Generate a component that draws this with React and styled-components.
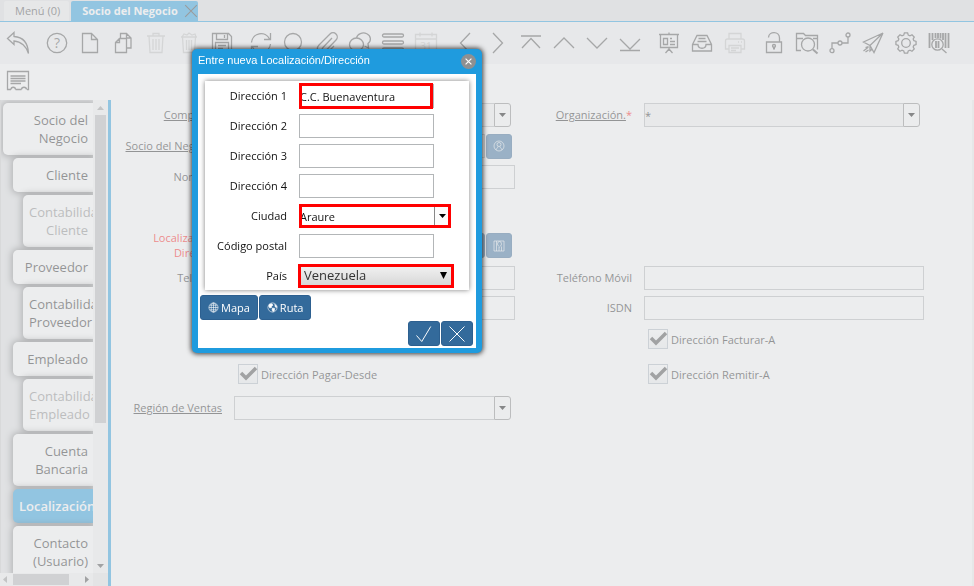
import React, { useState } from 'react';
import styled, { createGlobalStyle, css } from 'styled-components';

const GlobalStyle = createGlobalStyle`
  * { box-sizing: border-box; }
  body {
    margin: 0;
    overflow: hidden;
    font-family: 'Open Sans', 'Noto Sans', sans-serif;
    font-size: 11px;
    line-height: 15px;
    color: #111;
  }
  button, input, select { font: inherit; color: inherit; margin: 0; }
`;

const Page = styled.div`
  display: flex;
  flex-direction: column;
  height: 100vh;
  background: #fff;
`;

/* ---------- window tabs ---------- */

const WindowTabs = styled.nav`
  display: flex;
  align-items: flex-end;
  gap: 2px;
  height: 22px;
  padding-left: 4px;
  background: #e0e1e3;
  border-bottom: 1px solid #1f9bde;
`;

const WindowTab = styled.div`
  display: flex;
  align-items: center;
  height: 20px;
  padding-left: 11px;
  border-radius: 2px 2px 0 0;
  background: ${p => (p.$active ? '#1f9bde' : '#f0f0f1')};
  ${p => !p.$active && css`padding-right: 9px;`}
`;

const WindowTabLink = styled.a`
  padding-bottom: 1px;
  color: ${p => (p.$active ? '#fff' : '#444')};
  font-weight: ${p => (p.$active ? 700 : 400)};
  text-decoration: none;
  white-space: nowrap;
`;

const TabClose = styled.button`
  display: flex;
  padding: 0;
  margin-left: 6px;
  border: 0;
  background: none;
  color: #333;
`;

/* ---------- toolbar ---------- */

const Toolbar = styled.div`
  display: flex;
  gap: 6px;
  flex: none;
  height: ${p => (p.$second ? '36px' : '42px')};
  padding-left: 1px;
  background: ${p => (p.$second ? '#fff' : '#f3f3f4')};
`;

const ToolGroup = styled.div`
  display: flex;
`;

const ToolButton = styled.button`
  display: flex;
  align-items: center;
  justify-content: center;
  width: 33px;
  padding: 0;
  border: 0;
  background: none;
  color: #505050;
  &:disabled { color: #c4c4c4; }
`;

/* ---------- left tab list ---------- */

const Body = styled.div`
  display: flex;
  flex: 1;
  min-height: 0;
`;

const Side = styled.aside`
  display: grid;
  grid-template-columns: 93px 15px;
  grid-template-rows: 1fr 13px;
  flex: none;
  border-right: 3px solid #1f9bde;
  background: #e8e8e9;
`;

const TabList = styled.div`
  display: flex;
  flex-direction: column;
  gap: 3px;
  min-height: 0;
  overflow: hidden;
  padding-top: 3px;
  background: #e0e1e3;
  border-left: 1px solid #ccc;
`;

const SideTab = styled.a`
  flex: none;
  margin-left: ${p => 2 + p.$level * 10}px;
  padding: 8px 5px 8px 6px;
  border-radius: 5px 0 0 5px;
  background: ${p => (p.$active ? '#1f9bde' : '#fff')};
  box-shadow: 0 0 6px 2px rgba(0, 0, 0, 0.45);
  color: ${p => (p.$active ? '#fff' : p.$off ? '#888' : '#222')};
  font-size: 13px;
  line-height: 18px;
  font-weight: ${p => (p.$active ? 600 : 400)};
  text-align: right;
  text-decoration: none;
`;

const ScrollTrack = styled.div`
  display: flex;
  flex-direction: ${p => (p.$horizontal ? 'row' : 'column')};
  align-items: center;
  justify-content: space-between;
  padding: ${p => (p.$horizontal ? '0 4px 0 3px' : '6px 0 5px')};
  background: #f4f4f4;
  color: #444;
  > svg:first-child { color: #999; }
`;

const ScrollThumb = styled.div`
  background: #b9b9bb;
  ${p => p.$horizontal
    ? css`width: 56px; height: 11px; margin-right: 10px;`
    : css`flex: 0 1 308px; width: 11px; margin: 5px 0 auto;`}
`;

/* ---------- record form ---------- */

const Form = styled.form`
  flex: 1;
  display: grid;
  grid-template-columns: 111fr 281fr 105fr 280fr 36fr;
  grid-template-rows: 24px 26px 24px 30px 29px 24px 24px 26px 32px 24px;
  gap: 6px 12px;
  align-content: start;
  align-items: center;
  padding-top: 3px;
  border-right: 2px solid #f0f0f0;
`;

const Label = styled.label`
  grid-column: ${p => p.$col};
  grid-row: ${p => p.$row};
  padding-bottom: 2px;
  text-align: right;
  color: ${p => (p.$error ? '#f00' : '#222')};
`;

const Underlined = styled.span`
  text-decoration: underline;
`;

const Star = styled.span`
  color: #f00;
`;

const Cell = styled.div`
  grid-column: ${p => p.$col};
  grid-row: ${p => p.$row};
  display: flex;
  gap: 1px;
  min-width: 0;
  padding-right: ${p => p.$inset || 0}px;
`;

const TextBox = styled.input`
  flex: 1;
  min-width: 0;
  width: 100%;
  height: 24px;
  padding: 2px 0;
  border: 1px solid #b3b6b8;
  background: ${p => (p.readOnly ? '#f4f4f4' : '#fff')};
  outline: 0;
`;

const ComboBox = styled.div`
  flex: 1;
  display: flex;
  min-width: 0;
  ${TextBox} { border-right: 0; }
`;

const ComboButton = styled.button`
  display: flex;
  align-items: center;
  justify-content: center;
  width: 17px;
  height: 24px;
  padding: 0;
  border: 1px solid #888;
  border-radius: 0 3px 3px 0;
  background: #fcfcfc;
  color: #000;
`;

const ActionButton = styled.button`
  display: flex;
  align-items: center;
  justify-content: center;
  gap: 2px;
  min-width: ${p => (p.$wide ? '32px' : '26px')};
  height: 25px;
  padding: 0 ${p => (p.$text ? '7px' : '0')};
  border: 1px solid #2d6090;
  border-radius: 3px;
  background: #336a9b;
  color: #fff;
`;

const CheckLabel = styled.label`
  display: flex;
  align-items: center;
  gap: 3px;
  padding-left: 4px;
  color: #222;
`;

const CheckFrame = styled.span`
  display: grid;
  > * { grid-area: 1 / 1; }
  svg { pointer-events: none; color: #444; }
  input:not(:checked) + svg { visibility: hidden; }
`;

const CheckInput = styled.input`
  appearance: none;
  width: 20px;
  height: 20px;
  border: 1px solid #b0bac2;
  background: linear-gradient(#fff, #f0f2f3);
`;

/* ---------- dialog ---------- */

const Mask = styled.div`
  position: fixed;
  inset: 0;
  background: rgba(224, 225, 227, 0.6);
`;

const Dialog = styled.section`
  position: absolute;
  top: 49px;
  left: 192px;
  width: 290px;
  padding: 0 6px 5px;
  border-radius: 5px;
  background: #1f9bde;
  box-shadow: 0 0 5px 1px rgba(0, 0, 0, 0.75);
`;

const DialogHeader = styled.header`
  display: flex;
  align-items: center;
  justify-content: space-between;
  height: 25px;
`;

const DialogTitle = styled.h2`
  margin: 0;
  padding-bottom: 3px;
  color: #fff;
  font: 11px/15px 'Liberation Sans', Arial, sans-serif;
`;

const DialogClose = styled.button`
  display: flex;
  align-items: center;
  justify-content: center;
  width: 15px;
  height: 15px;
  padding: 0;
  border: 0;
  border-radius: 50%;
  background: #8f9092;
  color: #fff;
`;

const DialogBody = styled.div`
  padding: 7px 2px 2px;
  background: #fff;
`;

const Address = styled.div`
  display: grid;
  grid-template-columns: 82px 1fr;
  grid-auto-rows: 24px;
  gap: 6px 12px;
  align-items: center;
  margin: 0 5px 5px;
  padding: 3px 15px 2px 0;
  background: #fff;
  box-shadow: 0 0 5px rgba(0, 0, 0, 0.5);
`;

const AddressLabel = styled.label`
  padding-bottom: 2px;
  text-align: right;
  color: #111;
`;

/* a frame in red lies over the fields that have to be filled in */
const AddressField = styled.div`
  position: relative;
  display: flex;
  width: ${p => (p.$wide ? '152px' : '135px')};
  ${p => p.$frame && css`
    &::after {
      content: '';
      position: absolute;
      inset: ${p.$frame};
      border: 3px solid #f00;
      pointer-events: none;
    }
  `}
`;

const CountrySelect = styled.select`
  appearance: none;
  flex: 1;
  height: 24px;
  padding: 0 5px 2px;
  border: 0;
  background: linear-gradient(#f4f4f4, #d4d4d4);
  font-size: 13px;
  color: #333;
`;

const SelectArrow = styled.span`
  position: absolute;
  right: 4px;
  top: 8px;
  display: flex;
  pointer-events: none;
`;

const ButtonRow = styled.div`
  display: flex;
  gap: 1px;
  justify-content: ${p => (p.$end ? 'flex-end' : 'flex-start')};
  margin-bottom: 1px;
  ${p => p.$end && css`margin: 0 1px 0 0;`}
`;

/* ---------- icons ---------- */

const Icon = ({ size = 24, width = 1.3, children }) => (
  <svg width={size} height={size} viewBox="0 0 24 24" fill="none" stroke="currentColor" strokeWidth={width} aria-hidden="true">
    {children}
  </svg>
);

const gearPath = () => {
  const points = [];
  for (let i = 0; i < 8; i++) {
    [[-16, 8.2], [-9, 10.2], [9, 10.2], [16, 8.2]].forEach(([shift, r]) => {
      const a = ((i * 45 + shift) * Math.PI) / 180;
      points.push(`${(12 + r * Math.cos(a)).toFixed(2)} ${(12 + r * Math.sin(a)).toFixed(2)}`);
    });
  }
  return `M${points.join('L')}z`;
};

const icons = {
  undo: <path d="M1.500 7.500L8 1.500v4C17 6 22 12 22.500 22.500 20.500 15.500 15 10.500 8 10v3.500z" />,
  help: (
    <>
      <circle cx="12" cy="12" r="9.700" />
      <text x="12" y="17" textAnchor="middle" fontSize="14" fill="currentColor" stroke="none">?</text>
    </>
  ),
  file: <path d="M4.500 2.500h9l6 6v13h-15zM13.500 2.500v6h6" />,
  copy: <path d="M9.500 7V2.500h6l4.500 4.500v10h-4.500M15.500 2.500V7H20M4.500 11.500l4-4h7v14h-11zM8.500 7.500v4h-4" />,
  trash: <path d="M3 5h18M9 5V2.500h6V5M5 5l1 16.500h12L19 5M9 8v11M12 8v11M15 8v11" />,
  trashFull: <path d="M4 6h16M5 6l2-3 3 1 2-2 3 2 3-1 1 3M5.500 6l1 15.500h11l1-15.500M9.500 9v10M12 9v10M14.500 9v10" />,
  save: <path d="M2.500 2.500h16l3 3v16h-19zM6.500 2.500v6h11v-6M14.500 4v3M5.500 21.500v-10h13v10M8 14.500h8M8 17.500h5" />,
  refresh: <path d="M2.500 11.500A9.500 9.500 0 0 1 20.500 8M21.500 2v6.500H15M21.500 13A9.500 9.500 0 0 1 3.500 16M2.500 22v-6.500H9" />,
  search: <><circle cx="11" cy="11" r="8.500" /><path d="M17 17l5 5" /></>,
  clip: <path d="M17 7L8 16.500a2 2 0 0 0 3 3L21 9a4 4 0 0 0-6-6L4 14a5.500 5.500 0 0 0 8 8l7-7" />,
  chat: (
    <>
      <path d="M8.500 7A7 6 0 1 1 20 12.500l.5 4.500-4-2" />
      <ellipse cx="8.500" cy="13.500" rx="7" ry="6.500" />
      <path d="M4 18.500L3 22l5-2" />
    </>
  ),
  list: (
    <>
      <rect x="1.500" y="3" width="21" height="3" rx="1.500" />
      <rect x="1.500" y="10" width="21" height="3" rx="1.500" />
      <rect x="1.500" y="17" width="21" height="3" rx="1.500" />
    </>
  ),
  calendar: (
    <>
      <path d="M1.500 3.500h21v18h-21zM1.500 8h21M6 1.500v4M18 1.500v4" />
      <text x="12" y="19" textAnchor="middle" fontSize="10" fill="currentColor" stroke="none">31</text>
    </>
  ),
  prev: <path d="M17 2L7.500 12 17 22" />,
  next: <path d="M7 2l9.500 10L7 22" />,
  first: <path d="M2 5h20M3 17l9-9.500 9 9.500" />,
  up: <path d="M2 17l10-10 10 10" />,
  down: <path d="M2 7l10 10L22 7" />,
  last: <path d="M2 8l10 10L22 8M2 19.500h20" />,
  board: <path d="M2 3.500h20M12 1.500v2M3.500 3.500v13h17v-13M12 16.500v2M12 18l-3.500 4M12 18l3.500 4M6.500 7.500h4v6h-4zM13 7.500h2M13 10.500h5M13 13.500h5" />,
  inbox: <path d="M2.500 13.500L7 4.500h10l4.500 9v6.500h-19zM2.500 13.500H8c0 5 8 5 8 0h5.500M8.500 7.500h7M7.500 10.500h9" />,
  print: <path d="M6 8V2.500h12V8M6 18H2.500V10q0-2 2-2h15q2 0 2 2v8H18M6 14.500h12v7H6zM8 17h8M8 19.500h5M15 11h1M18 11h1" />,
  lock: (
    <>
      <path d="M4.500 11h15v10.500h-15zM6.500 6.500C7 0 17.500 0 17.500 7v4" />
      <path d="M12 18.500v-3" strokeWidth="2" />
      <circle cx="12" cy="15" r="1.500" />
    </>
  ),
  folder: (
    <>
      <path d="M6 19.500H1.500v-17h7l2 2h12v14M1.500 7.500H8M18 7.500h4.500" />
      <circle cx="13" cy="13.500" r="6.500" />
      <path d="M18 18.500l4.500 4" strokeWidth="2" />
    </>
  ),
  flow: (
    <>
      <circle cx="4" cy="19.700" r="2" />
      <circle cx="12" cy="12" r="2" />
      <circle cx="20" cy="4" r="2" />
      <path d="M4 17.700V12h6M14 12h6V6" />
    </>
  ),
  send: <path d="M22 2L2.500 11 9 14.500zM22 2l-9 19.500-4-7M9 14.500V20l2-2M2.500 20l5-4M4.500 21l3-2M4.500 16.500l3-1" />,
  gear: <><path d={gearPath()} /><circle cx="12" cy="12" r="4.300" /></>,
  barcode: (
    <>
      <path d="M2.500 2v15M18.500 2v15M21.500 2v15" strokeWidth="1.800" />
      <path d="M5.500 2v7M8.500 2v5M11 2v5M13.500 2v5.500M16 2v7" strokeWidth="1.800" />
      <circle cx="10.500" cy="13.500" r="5.700" />
      <path d="M9 10v7M11.500 10v7" strokeWidth="1.800" />
      <path d="M15 18l4.500 4" />
    </>
  ),
  report: (
    <>
      <path d="M5 19.500H1.500v-18h21v18H21M9.500 19.500h6" />
      <path d="M5 19.500c0-3 4.500-3 4.500 0M15.500 19.500c0-3 5-3 5 0" />
      <path d="M4.500 6h15M4.500 8.500h15M4.500 11h15M4.500 13.500H15" />
    </>
  ),
  cross: <path d="M2 2l20 20M22 2L2 22" />,
  check: <path d="M2 14l7 8L21 2" />,
  globe: (
    <>
      <circle cx="12" cy="12" r="10" />
      <ellipse cx="12" cy="12" rx="5" ry="10" />
      <path d="M12 2v20M2 12h20M4 7h16M4 17h16" />
    </>
  ),
  earth: (
    <>
      <circle cx="12" cy="12" r="10" />
      <path d="M5 5l6-1 2 3-3 2v3l-4 1-2-4zM12 13l5 1-1 5-3 2-2-4zM17 5l4 4v3l-3-1z" fill="currentColor" />
    </>
  ),
  person: (
    <>
      <circle cx="12" cy="12" r="10" />
      <circle cx="12" cy="9" r="4" />
      <path d="M6 20c0-3 3-3 4-7M18 20c0-3-3-3-4-7" />
    </>
  ),
  place: <path d="M2 2h20v20H2zM7 2v20M17 13v9M12 22v-8M9 8a4 5 0 0 1 8 0c0 3-4 6-4 6s-4-3-4-6z" />,
};

const Arrow = ({ dir = 'down' }) => {
  const shapes = { down: '0,0 7,0 3.500,4', up: '0,4 7,4 3.500,0', left: '4,0 4,7 0,3.500', right: '0,0 0,7 4,3.500' };
  const upright = dir === 'down' || dir === 'up';
  return (
    <svg width={upright ? 7 : 4} height={upright ? 4 : 7} fill="currentColor" aria-hidden="true">
      <polygon points={shapes[dir]} />
    </svg>
  );
};

/* ---------- data ---------- */

const toolGroups = [
  [['undo', 'Deshacer']],
  [['help', 'Ayuda'], ['file', 'Nuevo'], ['copy', 'Copiar'], ['trash', 'Borrar', true], ['trashFull', 'Borrar selección', true], ['save', 'Guardar']],
  [['refresh', 'Refrescar'], ['search', 'Buscar'], ['clip', 'Adjunto'], ['chat', 'Chat'], ['list', 'Rejilla'], ['calendar', 'Historial', true]],
  [['prev', 'Anterior'], ['next', 'Siguiente'], ['first', 'Primero'], ['up', 'Subir'], ['down', 'Bajar'], ['last', 'Último']],
  [['board', 'Informe'], ['inbox', 'Archivo'], ['print', 'Imprimir', true]],
  [['lock', 'Bloquear'], ['folder', 'Zoom'], ['flow', 'Flujo'], ['send', 'Solicitud'], ['gear', 'Proceso'], ['barcode', 'Producto']],
];

const sideTabs = [
  { name: 'Socio del Negocio', level: 0 },
  { name: 'Cliente', level: 1 },
  { name: 'Contabilidad Cliente', level: 2, off: true },
  { name: 'Proveedor', level: 1 },
  { name: 'Contabilidad Proveedor', level: 2 },
  { name: 'Empleado', level: 1 },
  { name: 'Contabilidad Empleado', level: 2, off: true },
  { name: 'Cuenta Bancaria', level: 1 },
  { name: 'Localización', level: 1, active: true },
  { name: 'Contacto (Usuario)', level: 1 },
];

/* ---------- parts ---------- */

const Tool = ({ icon, name, disabled }) => (
  <ToolButton type="button" aria-label={name} disabled={disabled}>
    <Icon>{icons[icon]}</Icon>
  </ToolButton>
);

const Combo = ({ id, ...rest }) => (
  <ComboBox>
    <TextBox id={id} {...rest} />
    <ComboButton type="button" aria-label="Abrir lista"><Arrow /></ComboButton>
  </ComboBox>
);

const Check = ({ col, row, children }) => (
  <Cell $col={col} $row={row}>
    <CheckLabel>
      <CheckFrame>
        <CheckInput type="checkbox" defaultChecked />
        <svg width="20" height="20" fill="none" stroke="currentColor" strokeWidth="3.500">
          <path d="M3 9l5 5L18 4" />
        </svg>
      </CheckFrame>
      {children}
    </CheckLabel>
  </Cell>
);

const LocationDialog = () => {
  const [address, setAddress] = useState({
    dir1: 'C.C. Buenaventura', dir2: '', dir3: '', dir4: '', city: 'Araure', postal: '',
  });
  const bind = (key) => ({
    id: key,
    value: address[key],
    onChange: (e) => setAddress({ ...address, [key]: e.target.value }),
  });

  return (
    <Dialog role="dialog" aria-labelledby="dialog-title">
      <DialogHeader>
        <DialogTitle id="dialog-title">Entre nueva Localización/Dirección</DialogTitle>
        <DialogClose type="button" aria-label="Cerrar"><Icon size={7} width={4}>{icons.cross}</Icon></DialogClose>
      </DialogHeader>
      <DialogBody>
        <Address>
          {[1, 2, 3, 4].map((n) => (
            <React.Fragment key={n}>
              <AddressLabel htmlFor={`dir${n}`}>Dirección {n}</AddressLabel>
              <AddressField $frame={n === 1 && '-1px 1px -1px 0'}><TextBox {...bind(`dir${n}`)} /></AddressField>
            </React.Fragment>
          ))}
          <AddressLabel htmlFor="city">Ciudad</AddressLabel>
          <AddressField $wide $frame="0"><Combo {...bind('city')} /></AddressField>
          <AddressLabel htmlFor="postal">Código postal</AddressLabel>
          <AddressField><TextBox {...bind('postal')} /></AddressField>
          <AddressLabel htmlFor="country">País</AddressLabel>
          <AddressField $wide $frame="0 -3px 0 -1px">
            <CountrySelect id="country"><option>Venezuela</option></CountrySelect>
            <SelectArrow><svg width="7" height="7"><polygon points="0,0 7,0 3.500,7" /></svg></SelectArrow>
          </AddressField>
        </Address>
        <ButtonRow>
          <ActionButton type="button" $text><Icon size={11}>{icons.globe}</Icon>Mapa</ActionButton>
          <ActionButton type="button" $text><Icon size={11}>{icons.earth}</Icon>Ruta</ActionButton>
        </ButtonRow>
        <ButtonRow $end>
          <ActionButton type="button" $wide aria-label="Aceptar"><Icon size={18}>{icons.check}</Icon></ActionButton>
          <ActionButton type="button" $wide aria-label="Cancelar"><Icon size={18}>{icons.cross}</Icon></ActionButton>
        </ButtonRow>
      </DialogBody>
    </Dialog>
  );
};

const App = () => (
  <>
    <GlobalStyle />
    <Page>
      <WindowTabs>
        <WindowTab><WindowTabLink href="#menu">Menú (0)</WindowTabLink></WindowTab>
        <WindowTab $active>
          <WindowTabLink href="#socio" $active>Socio del Negocio</WindowTabLink>
          <TabClose type="button" aria-label="Cerrar pestaña"><Icon size={14} width={1.8}>{icons.cross}</Icon></TabClose>
        </WindowTab>
      </WindowTabs>

      <Toolbar>
        {toolGroups.map((group, i) => (
          <ToolGroup key={i}>
            {group.map(([icon, name, disabled]) => <Tool key={icon} icon={icon} name={name} disabled={disabled} />)}
          </ToolGroup>
        ))}
      </Toolbar>
      <Toolbar $second><Tool icon="report" name="Reporte" /></Toolbar>

      <Body>
        <Side>
          <TabList>
            {sideTabs.map((tab) => (
              <SideTab key={tab.name} href="#tab" $level={tab.level} $off={tab.off} $active={tab.active}>{tab.name}</SideTab>
            ))}
          </TabList>
          <ScrollTrack><Arrow dir="up" /><ScrollThumb /><Arrow /></ScrollTrack>
          <ScrollTrack $horizontal><Arrow dir="left" /><ScrollThumb $horizontal /><Arrow dir="right" /></ScrollTrack>
        </Side>

        <Form>
          <Label $col={1} $row={1} htmlFor="company"><Underlined>Compañía</Underlined><Star>*</Star></Label>
          <Cell $col={2} $row={1} $inset={4}><Combo id="company" readOnly /></Cell>
          <Label $col={3} $row={1} htmlFor="org"><Underlined>Organización.</Underlined><Star>*</Star></Label>
          <Cell $col={4} $row={1} $inset={4}><Combo id="org" defaultValue="*" readOnly /></Cell>

          <Label $col={1} $row={2} htmlFor="partner"><Underlined>Socio del Negocio</Underlined><Star>*</Star></Label>
          <Cell $col={2} $row={2} $inset={3}>
            <TextBox id="partner" readOnly />
            <ActionButton type="button" aria-label="Ver socio"><Icon size={12}>{icons.person}</Icon></ActionButton>
          </Cell>

          <Label $col={1} $row={3} htmlFor="name">Nombre<Star>*</Star></Label>
          <Cell $col={2} $row={3}><TextBox id="name" /></Cell>

          <Label $col={1} $row={5} $error htmlFor="location">Localización / Dirección</Label>
          <Cell $col={2} $row={5} $inset={3}>
            <TextBox id="location" />
            <ActionButton type="button" aria-label="Mapa" />
            <ActionButton type="button" aria-label="Localización"><Icon size={12}>{icons.place}</Icon></ActionButton>
          </Cell>

          <Label $col={1} $row={6} htmlFor="phone">Teléfono</Label>
          <Cell $col={2} $row={6}><TextBox id="phone" /></Cell>
          <Label $col={3} $row={6} htmlFor="mobile">Teléfono Móvil</Label>
          <Cell $col={4} $row={6}><TextBox id="mobile" /></Cell>

          <Label $col={1} $row={7} htmlFor="fax">Fax</Label>
          <Cell $col={2} $row={7}><TextBox id="fax" /></Cell>
          <Label $col={3} $row={7} htmlFor="isdn">ISDN</Label>
          <Cell $col={4} $row={7}><TextBox id="isdn" /></Cell>

          <Check col={2} row={8}>Dirección Enviar-A</Check>
          <Check col={4} row={8}>Dirección Facturar-A</Check>
          <Check col={2} row={9}>Dirección Pagar-Desde</Check>
          <Check col={4} row={9}>Dirección Remitir-A</Check>

          <Label $col={1} $row={10} htmlFor="region"><Underlined>Región de Ventas</Underlined></Label>
          <Cell $col={2} $row={10} $inset={4}><Combo id="region" /></Cell>
        </Form>
      </Body>
    </Page>
    <Mask />
    <LocationDialog />
  </>
);

export default App;
